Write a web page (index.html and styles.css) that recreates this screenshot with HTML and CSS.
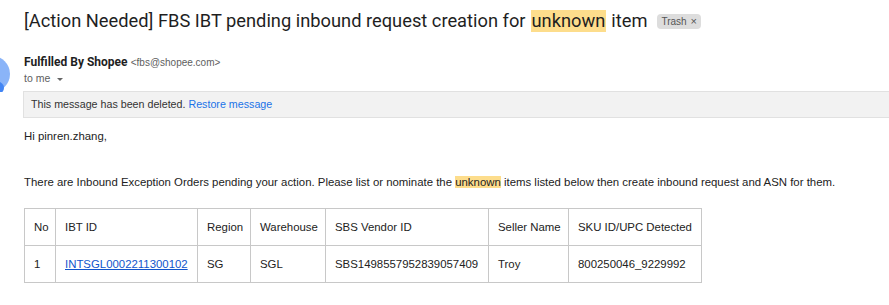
FILE: index.html
```html
<!DOCTYPE html>
<html lang="en">
  <head>
    <meta charset="UTF-8" />
    <title>[Action Needed] FBS IBT pending inbound request</title>
    <link rel="stylesheet" href="styles.css">
  </head>
  <body>
    <div class="mail">
      <h1 class="subject">
        [Action Needed] FBS IBT pending inbound request creation for
        <span class="hl">unknown</span> item
        <span class="chip">Trash <span class="chip-x">&times;</span></span>
      </h1>

      <div class="sender-row">
        <div class="avatar">
          <svg width="36" height="36" viewBox="0 0 36 36">
            <circle cx="18" cy="18" r="18" fill="#8ab4f8" />
            <circle cx="18" cy="14" r="6" fill="#6fa1f4" />
            <ellipse cx="18" cy="32" rx="12" ry="8" fill="#4285f4" />
          </svg>
        </div>
        <div class="sender-info">
          <div class="from">
            <span class="from-name">Fulfilled By Shopee</span>
            <span class="from-addr">&lt;fbs@shopee.com&gt;</span>
          </div>
          <div class="to">to me <span class="caret"></span></div>
        </div>
      </div>

      <div class="notice">
        This message has been deleted. <a href="#" class="restore">Restore message</a>
      </div>

      <div class="body-text">
        <p class="greet">Hi pinren.zhang,</p>
        <p class="lead">
          There are Inbound Exception Orders pending your action. Please list or nominate the
          <span class="hl">unknown</span> items listed below then create inbound request and ASN for them.
        </p>

        <table class="orders">
          <colgroup>
            <col class="c-no" />
            <col class="c-id" />
            <col class="c-region" />
            <col class="c-wh" />
            <col class="c-vendor" />
            <col class="c-seller" />
            <col class="c-sku" />
          </colgroup>
          <thead>
            <tr>
              <th>No</th>
              <th>IBT ID</th>
              <th>Region</th>
              <th>Warehouse</th>
              <th>SBS Vendor ID</th>
              <th>Seller Name</th>
              <th>SKU ID/UPC Detected</th>
            </tr>
          </thead>
          <tbody>
            <tr>
              <td>1</td>
              <td><a href="#" class="ibt-link">INTSGL0002211300102</a></td>
              <td>SG</td>
              <td>SGL</td>
              <td>SBS1498557952839057409</td>
              <td>Troy</td>
              <td>800250046_9229992</td>
            </tr>
          </tbody>
        </table>
      </div>
    </div>
  </body>
</html>
```

FILE: styles.css
```css
* {
  box-sizing: border-box;
  margin: 0;
  padding: 0;
}

html,
body {
  height: 100%;
  overflow: hidden;
  background: #ffffff;
}

body {
  font-family: "Liberation Sans", Arial, sans-serif;
  color: #222222;
  font-size: 11.4px;
}

.mail {
  padding: 7px 0 0 24px;
}

/* --- subject line --- */
.subject {
  font-family: Roboto, "Open Sans", sans-serif;
  font-size: 18.3px;
  font-weight: 400;
  color: #1f1f1f;
  line-height: 28px;
  display: flex;
  align-items: center;
  gap: 5px;
  white-space: nowrap;
}

.hl {
  background-color: #fddd8c;
}

.subject .hl {
  padding: 0 1px;
  line-height: 22px;
}

.chip {
  font-family: "Liberation Sans", Arial, sans-serif;
  font-size: 10px;
  color: #555555;
  background: #dddddd;
  border-radius: 4px;
  padding: 1px 4px;
  margin-left: 5px;
  line-height: 12px;
}

.chip-x {
  font-size: 11px;
  margin-left: 1px;
}

/* --- sender --- */
.sender-row {
  display: flex;
  align-items: flex-start;
  margin-top: 20px;
  margin-left: -50px;
  gap: 14px;
}

.avatar {
  width: 36px;
  height: 36px;
  margin-top: 1px;
  flex-shrink: 0;
}

.avatar svg {
  display: block;
}

.from {
  line-height: 15px;
}

.from-name {
  font-family: Roboto, "Open Sans", sans-serif;
  font-weight: 700;
  font-size: 12px;
  color: #1f1f1f;
}

.from-addr {
  font-size: 10px;
  color: #5e5e5e;
}

.to {
  font-size: 10.5px;
  color: #5e5e5e;
  line-height: 14px;
  margin-top: 1px;
}

.caret {
  display: inline-block;
  width: 0;
  height: 0;
  border-left: 3px solid transparent;
  border-right: 3px solid transparent;
  border-top: 3px solid #666666;
  vertical-align: middle;
  margin-left: 4px;
}

/* --- deleted notice --- */
.notice {
  margin-top: -1px;
  margin-left: -1px;
  background: #f2f2f2;
  border: 1px solid #e1e1e1;
  border-right: none;
  padding: 5px 7px 6px 7px;
  font-size: 10.7px;
  line-height: 14px;
  color: #333333;
}

.restore {
  color: #1a73e8;
  text-decoration: none;
}

/* --- message body --- */
.body-text {
  color: #222222;
}

.greet {
  margin-top: 11px;
  line-height: 14px;
}

.lead {
  margin-top: 32px;
  line-height: 14px;
}

.orders {
  margin-top: 19px;
  border-collapse: collapse;
  table-layout: fixed;
  width: 677px;
}

.orders th,
.orders td {
  border: 1px solid #c8c8c8;
  text-align: left;
  font-weight: 400;
  padding: 11px 9px 11px 9px;
  line-height: 14px;
  white-space: nowrap;
  overflow: hidden;
}

.c-no { width: 31px; }
.c-id { width: 142px; }
.c-region { width: 53px; }
.c-wh { width: 75px; }
.c-vendor { width: 163px; }
.c-seller { width: 80px; }
.c-sku { width: 133px; }

.ibt-link {
  color: #1155cc;
}
```
